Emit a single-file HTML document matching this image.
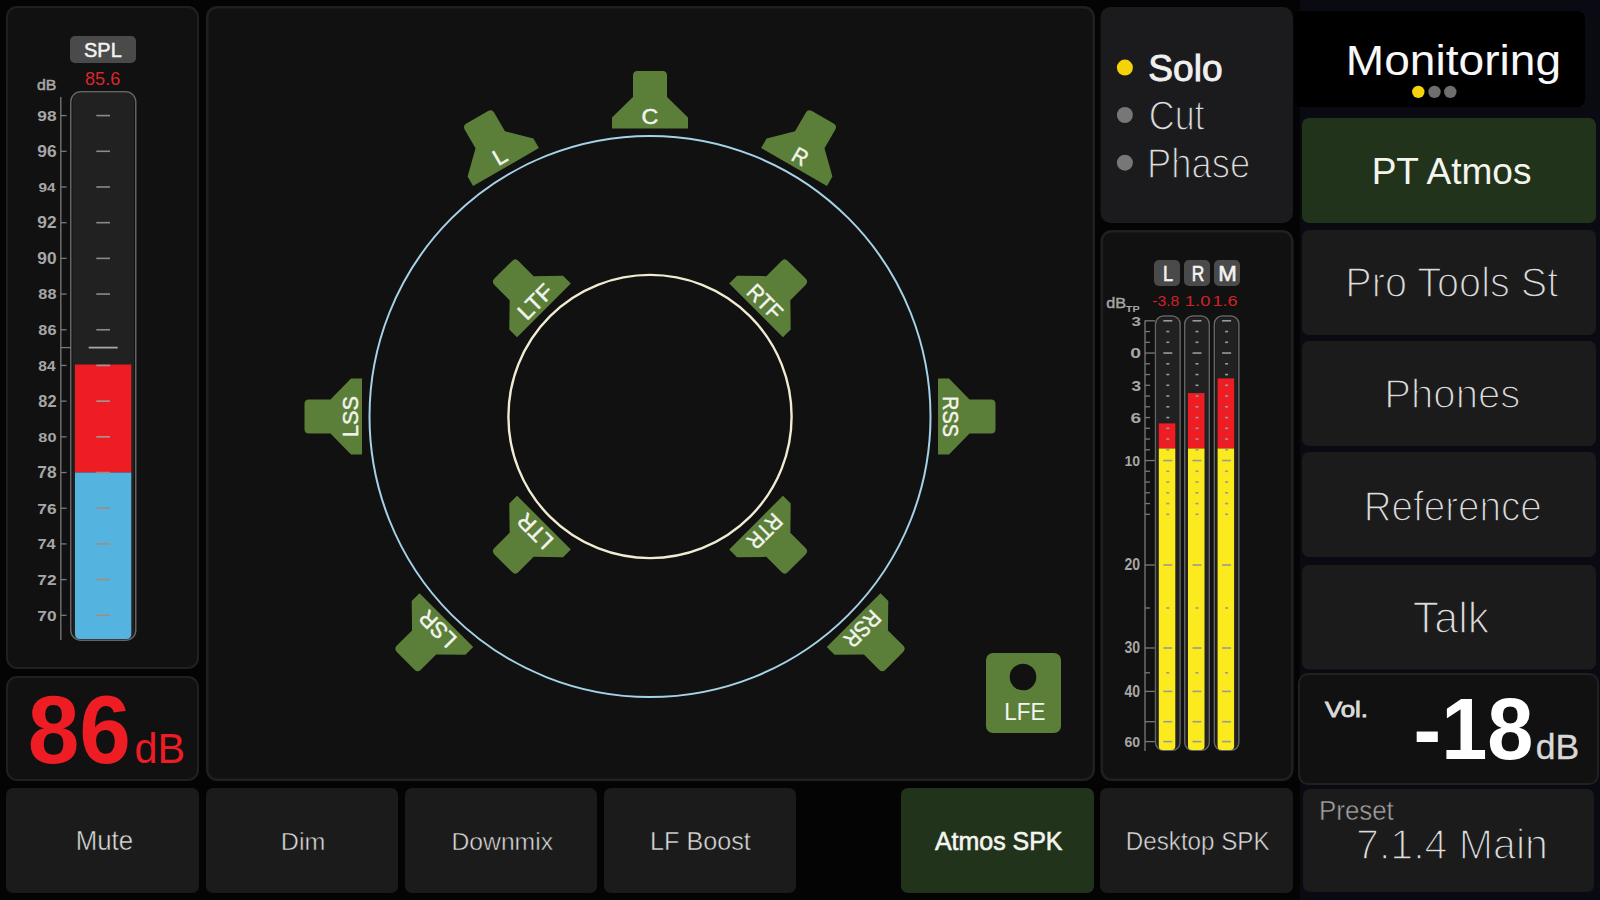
<!DOCTYPE html>
<html><head><meta charset="utf-8"><title>Monitoring</title>
<style>html,body{margin:0;padding:0;background:#040404;overflow:hidden;width:1600px;height:900px}svg{display:block}text{font-family:"Liberation Sans", sans-serif}</style>
</head><body>
<svg width="1600" height="900" viewBox="0 0 1600 900">
<rect x="0" y="0" width="1600" height="900" fill="#040404"/>
<rect x="1300" y="0" width="300" height="900" fill="#0a0a13"/>
<rect x="7.00" y="7.00" width="191.00" height="661.00" rx="10" fill="#111111" stroke="#202020" stroke-width="2" />
<rect x="70.00" y="36.00" width="66.00" height="27.00" rx="5" fill="#4a4a4a" />
<text x="84.06" y="57.2" font-size="20.22" fill="#f2f2f2" font-weight="normal" textLength="37.72" lengthAdjust="spacingAndGlyphs" stroke="#f2f2f2" stroke-width="0.5">SPL</text>
<text x="85.04" y="85" font-size="19.27" fill="#d8262a" font-weight="normal" textLength="35.23" lengthAdjust="spacingAndGlyphs">85.6</text>
<text x="36.95" y="90" font-size="15.5" fill="#a8a8a8" font-weight="normal" textLength="19.39" lengthAdjust="spacingAndGlyphs" stroke="#a8a8a8" stroke-width="0.5">dB</text>
<rect x="70.75" y="91.75" width="65.00" height="548.50" rx="10" fill="none" stroke="#646464" stroke-width="1.5" />
<rect x="72.50" y="93.00" width="61.50" height="546.00" rx="8" fill="#212121" />
<path d="M75 364.6 H131.3 V472.5 H75 Z" fill="#ee1d24"/>
<path d="M75 472.5 H131.3 V634 Q131.3 639 126.3 639 H80 Q75 639 75 634 Z" fill="#55b3df"/>
<line x1="60.8" y1="97" x2="60.8" y2="640" stroke="#7a7a7a" stroke-width="1.3"/>
<line x1="60.8" y1="115.6" x2="66.5" y2="115.6" stroke="#7a7a7a" stroke-width="1.3"/>
<text x="37.37" y="121.0" font-size="13.89" fill="#a6a6a6" font-weight="bold" textLength="19.26" lengthAdjust="spacingAndGlyphs">98</text>
<line x1="96.3" y1="115.6" x2="110" y2="115.6" stroke="#8a8a8a" stroke-width="1.6"/>
<line x1="60.8" y1="151.29285714285714" x2="66.5" y2="151.29285714285714" stroke="#7a7a7a" stroke-width="1.3"/>
<text x="37.37" y="156.69285714285715" font-size="15.73" fill="#a6a6a6" font-weight="bold" textLength="19.26" lengthAdjust="spacingAndGlyphs">96</text>
<line x1="96.3" y1="151.29285714285714" x2="110" y2="151.29285714285714" stroke="#8a8a8a" stroke-width="1.6"/>
<line x1="60.8" y1="186.98571428571427" x2="66.5" y2="186.98571428571427" stroke="#7a7a7a" stroke-width="1.3"/>
<text x="38.41" y="192.38571428571427" font-size="13.55" fill="#a6a6a6" font-weight="bold" textLength="17.13" lengthAdjust="spacingAndGlyphs">94</text>
<line x1="96.3" y1="186.98571428571427" x2="110" y2="186.98571428571427" stroke="#8a8a8a" stroke-width="1.6"/>
<line x1="60.8" y1="222.67857142857142" x2="66.5" y2="222.67857142857142" stroke="#7a7a7a" stroke-width="1.3"/>
<text x="37.37" y="228.07857142857142" font-size="16.31" fill="#a6a6a6" font-weight="bold" textLength="19.26" lengthAdjust="spacingAndGlyphs">92</text>
<line x1="96.3" y1="222.67857142857142" x2="110" y2="222.67857142857142" stroke="#8a8a8a" stroke-width="1.6"/>
<line x1="60.8" y1="258.3714285714285" x2="66.5" y2="258.3714285714285" stroke="#7a7a7a" stroke-width="1.3"/>
<text x="37.37" y="263.7714285714285" font-size="16.7" fill="#a6a6a6" font-weight="bold" textLength="19.26" lengthAdjust="spacingAndGlyphs">90</text>
<line x1="96.3" y1="258.3714285714285" x2="110" y2="258.3714285714285" stroke="#8a8a8a" stroke-width="1.6"/>
<line x1="60.8" y1="294.0642857142857" x2="66.5" y2="294.0642857142857" stroke="#7a7a7a" stroke-width="1.3"/>
<text x="38.33" y="299.46428571428567" font-size="15.35" fill="#a6a6a6" font-weight="bold" textLength="18.11" lengthAdjust="spacingAndGlyphs">88</text>
<line x1="96.3" y1="294.0642857142857" x2="110" y2="294.0642857142857" stroke="#8a8a8a" stroke-width="1.6"/>
<line x1="60.8" y1="329.75714285714287" x2="66.5" y2="329.75714285714287" stroke="#7a7a7a" stroke-width="1.3"/>
<text x="38.33" y="335.15714285714284" font-size="14.38" fill="#a6a6a6" font-weight="bold" textLength="18.11" lengthAdjust="spacingAndGlyphs">86</text>
<line x1="96.3" y1="329.75714285714287" x2="110" y2="329.75714285714287" stroke="#8a8a8a" stroke-width="1.6"/>
<line x1="60.8" y1="365.44999999999993" x2="66.5" y2="365.44999999999993" stroke="#7a7a7a" stroke-width="1.3"/>
<text x="38.33" y="370.8499999999999" font-size="14.71" fill="#a6a6a6" font-weight="bold" textLength="17.17" lengthAdjust="spacingAndGlyphs">84</text>
<line x1="96.3" y1="365.44999999999993" x2="110" y2="365.44999999999993" stroke="#9a9a9a" stroke-width="1.6"/>
<line x1="60.8" y1="401.1428571428571" x2="66.5" y2="401.1428571428571" stroke="#7a7a7a" stroke-width="1.3"/>
<text x="38.33" y="406.5428571428571" font-size="16.58" fill="#a6a6a6" font-weight="bold" textLength="18.11" lengthAdjust="spacingAndGlyphs">82</text>
<line x1="96.3" y1="401.1428571428571" x2="110" y2="401.1428571428571" stroke="#9a9a9a" stroke-width="1.6"/>
<line x1="60.8" y1="436.8357142857142" x2="66.5" y2="436.8357142857142" stroke="#7a7a7a" stroke-width="1.3"/>
<text x="38.33" y="442.23571428571415" font-size="13.68" fill="#a6a6a6" font-weight="bold" textLength="18.11" lengthAdjust="spacingAndGlyphs">80</text>
<line x1="96.3" y1="436.8357142857142" x2="110" y2="436.8357142857142" stroke="#9a9a9a" stroke-width="1.6"/>
<line x1="60.8" y1="472.52857142857135" x2="66.5" y2="472.52857142857135" stroke="#7a7a7a" stroke-width="1.3"/>
<text x="37.37" y="477.92857142857133" font-size="15.58" fill="#a6a6a6" font-weight="bold" textLength="19.26" lengthAdjust="spacingAndGlyphs">78</text>
<line x1="96.3" y1="472.52857142857135" x2="110" y2="472.52857142857135" stroke="#a08c84" stroke-width="1.6"/>
<line x1="60.8" y1="508.22142857142853" x2="66.5" y2="508.22142857142853" stroke="#7a7a7a" stroke-width="1.3"/>
<text x="37.37" y="513.6214285714285" font-size="14.62" fill="#a6a6a6" font-weight="bold" textLength="19.26" lengthAdjust="spacingAndGlyphs">76</text>
<line x1="96.3" y1="508.22142857142853" x2="110" y2="508.22142857142853" stroke="#a08c84" stroke-width="1.6"/>
<line x1="60.8" y1="543.9142857142857" x2="66.5" y2="543.9142857142857" stroke="#7a7a7a" stroke-width="1.3"/>
<text x="37.4" y="549.3142857142857" font-size="13.72" fill="#a6a6a6" font-weight="bold" textLength="18.19" lengthAdjust="spacingAndGlyphs">74</text>
<line x1="96.3" y1="543.9142857142857" x2="110" y2="543.9142857142857" stroke="#a08c84" stroke-width="1.6"/>
<line x1="60.8" y1="579.6071428571428" x2="66.5" y2="579.6071428571428" stroke="#7a7a7a" stroke-width="1.3"/>
<text x="37.37" y="585.0071428571428" font-size="13.75" fill="#a6a6a6" font-weight="bold" textLength="19.26" lengthAdjust="spacingAndGlyphs">72</text>
<line x1="96.3" y1="579.6071428571428" x2="110" y2="579.6071428571428" stroke="#a08c84" stroke-width="1.6"/>
<line x1="60.8" y1="615.3" x2="66.5" y2="615.3" stroke="#7a7a7a" stroke-width="1.3"/>
<text x="37.37" y="620.6999999999999" font-size="15.54" fill="#a6a6a6" font-weight="bold" textLength="19.26" lengthAdjust="spacingAndGlyphs">70</text>
<line x1="96.3" y1="615.3" x2="110" y2="615.3" stroke="#a08c84" stroke-width="1.6"/>
<line x1="60.8" y1="347.6035714285714" x2="70.7" y2="347.6035714285714" stroke="#7a7a7a" stroke-width="1.3"/>
<line x1="88.7" y1="347.6035714285714" x2="117.7" y2="347.6035714285714" stroke="#a8a8a8" stroke-width="1.8"/>
<rect x="7.00" y="677.00" width="191.00" height="103.00" rx="10" fill="#111111" stroke="#202020" stroke-width="2" />
<text x="27.66" y="762.7" font-size="95.68" fill="#ee1d24" font-weight="bold" textLength="103.28" lengthAdjust="spacingAndGlyphs">86</text>
<text x="134.49" y="762.7" font-size="43.21" fill="#ee1d24" font-weight="normal" textLength="50.61" lengthAdjust="spacingAndGlyphs">dB</text>
<rect x="207.25" y="7.25" width="886.50" height="772.50" rx="10" fill="#111111" stroke="#202020" stroke-width="2.5" />
<circle cx="650" cy="416.5" r="280.5" fill="none" stroke="#a6d2e8" stroke-width="2"/>
<circle cx="650" cy="416.5" r="141.6" fill="none" stroke="#f0ecd2" stroke-width="2.4"/>
<g transform="translate(650,416.5) rotate(0) translate(0,-288)">
<path d="M-38 0 L-38 -11 L-17 -31.5 L-17 -53 Q-17 -57.5 -12.5 -57.5 L12.5 -57.5 Q17 -57.5 17 -53 L17 -31.5 L38 -11 L38 0 Z" fill="#5b7f39"/>
<text x="0" y="-4.5" font-size="22.5" fill="#f4f4ee" stroke="#f4f4ee" stroke-width="0.45" text-anchor="middle" textLength="16.8" lengthAdjust="spacingAndGlyphs">C</text>
</g>
<g transform="translate(650,416.5) rotate(-30) translate(0,-288)">
<path d="M-38 0 L-38 -11 L-17 -31.5 L-17 -53 Q-17 -57.5 -12.5 -57.5 L12.5 -57.5 Q17 -57.5 17 -53 L17 -31.5 L38 -11 L38 0 Z" fill="#5b7f39"/>
<text x="0" y="-4.5" font-size="22.5" fill="#f4f4ee" stroke="#f4f4ee" stroke-width="0.45" text-anchor="middle" textLength="12.6" lengthAdjust="spacingAndGlyphs">L</text>
</g>
<g transform="translate(650,416.5) rotate(30) translate(0,-288)">
<path d="M-38 0 L-38 -11 L-17 -31.5 L-17 -53 Q-17 -57.5 -12.5 -57.5 L12.5 -57.5 Q17 -57.5 17 -53 L17 -31.5 L38 -11 L38 0 Z" fill="#5b7f39"/>
<text x="0" y="-4.5" font-size="22.5" fill="#f4f4ee" stroke="#f4f4ee" stroke-width="0.45" text-anchor="middle" textLength="14.7" lengthAdjust="spacingAndGlyphs">R</text>
</g>
<g transform="translate(650,416.5) rotate(-90) translate(0,-288)">
<path d="M-38 0 L-38 -11 L-17 -31.5 L-17 -53 Q-17 -57.5 -12.5 -57.5 L12.5 -57.5 Q17 -57.5 17 -53 L17 -31.5 L38 -11 L38 0 Z" fill="#5b7f39"/>
<text x="0" y="-4.5" font-size="22.5" fill="#f4f4ee" stroke="#f4f4ee" stroke-width="0.45" text-anchor="middle" textLength="41.0" lengthAdjust="spacingAndGlyphs">LSS</text>
</g>
<g transform="translate(650,416.5) rotate(90) translate(0,-288)">
<path d="M-38 0 L-38 -11 L-17 -31.5 L-17 -53 Q-17 -57.5 -12.5 -57.5 L12.5 -57.5 Q17 -57.5 17 -53 L17 -31.5 L38 -11 L38 0 Z" fill="#5b7f39"/>
<text x="0" y="-4.5" font-size="22.5" fill="#f4f4ee" stroke="#f4f4ee" stroke-width="0.45" text-anchor="middle" textLength="41.0" lengthAdjust="spacingAndGlyphs">RSS</text>
</g>
<g transform="translate(650,416.5) rotate(-135) translate(0,-288)">
<path d="M-38 0 L-38 -11 L-17 -31.5 L-17 -53 Q-17 -57.5 -12.5 -57.5 L12.5 -57.5 Q17 -57.5 17 -53 L17 -31.5 L38 -11 L38 0 Z" fill="#5b7f39"/>
<text x="0" y="-4.5" font-size="22.5" fill="#f4f4ee" stroke="#f4f4ee" stroke-width="0.45" text-anchor="middle" textLength="42.0" lengthAdjust="spacingAndGlyphs">LSR</text>
</g>
<g transform="translate(650,416.5) rotate(135) translate(0,-288)">
<path d="M-38 0 L-38 -11 L-17 -31.5 L-17 -53 Q-17 -57.5 -12.5 -57.5 L12.5 -57.5 Q17 -57.5 17 -53 L17 -31.5 L38 -11 L38 0 Z" fill="#5b7f39"/>
<text x="0" y="-4.5" font-size="22.5" fill="#f4f4ee" stroke="#f4f4ee" stroke-width="0.45" text-anchor="middle" textLength="42.0" lengthAdjust="spacingAndGlyphs">RSR</text>
</g>
<g transform="translate(650,416.5) rotate(-45) translate(0,-150)">
<path d="M-38 0 L-38 -11 L-17 -31.5 L-17 -53 Q-17 -57.5 -12.5 -57.5 L12.5 -57.5 Q17 -57.5 17 -53 L17 -31.5 L38 -11 L38 0 Z" fill="#5b7f39"/>
<text x="0" y="-4.5" font-size="22.5" fill="#f4f4ee" stroke="#f4f4ee" stroke-width="0.45" text-anchor="middle" textLength="39.9" lengthAdjust="spacingAndGlyphs">LTF</text>
</g>
<g transform="translate(650,416.5) rotate(45) translate(0,-150)">
<path d="M-38 0 L-38 -11 L-17 -31.5 L-17 -53 Q-17 -57.5 -12.5 -57.5 L12.5 -57.5 Q17 -57.5 17 -53 L17 -31.5 L38 -11 L38 0 Z" fill="#5b7f39"/>
<text x="0" y="-4.5" font-size="22.5" fill="#f4f4ee" stroke="#f4f4ee" stroke-width="0.45" text-anchor="middle" textLength="39.9" lengthAdjust="spacingAndGlyphs">RTF</text>
</g>
<g transform="translate(650,416.5) rotate(-135) translate(0,-150)">
<path d="M-38 0 L-38 -11 L-17 -31.5 L-17 -53 Q-17 -57.5 -12.5 -57.5 L12.5 -57.5 Q17 -57.5 17 -53 L17 -31.5 L38 -11 L38 0 Z" fill="#5b7f39"/>
<text x="0" y="-4.5" font-size="22.5" fill="#f4f4ee" stroke="#f4f4ee" stroke-width="0.45" text-anchor="middle" textLength="39.9" lengthAdjust="spacingAndGlyphs">LTR</text>
</g>
<g transform="translate(650,416.5) rotate(135) translate(0,-150)">
<path d="M-38 0 L-38 -11 L-17 -31.5 L-17 -53 Q-17 -57.5 -12.5 -57.5 L12.5 -57.5 Q17 -57.5 17 -53 L17 -31.5 L38 -11 L38 0 Z" fill="#5b7f39"/>
<text x="0" y="-4.5" font-size="22.5" fill="#f4f4ee" stroke="#f4f4ee" stroke-width="0.45" text-anchor="middle" textLength="39.9" lengthAdjust="spacingAndGlyphs">RTR</text>
</g>
<rect x="986.00" y="653.00" width="75.00" height="80.00" rx="7" fill="#5b7f39" />
<circle cx="1023" cy="677" r="13.3" fill="#111111"/>
<text x="1004.2" y="719.7" font-size="24.17" fill="#f4f4ee" font-weight="normal" textLength="41.22" lengthAdjust="spacingAndGlyphs">LFE</text>
<rect x="1100.50" y="7.00" width="192.50" height="216.00" rx="10" fill="#1b1b1d" />
<circle cx="1124.9" cy="67.6" r="8" fill="#f5d20a"/>
<circle cx="1124.9" cy="115" r="8" fill="#777777"/>
<circle cx="1124.9" cy="162.7" r="8" fill="#777777"/>
<text x="1148.27" y="80.9" font-size="36.26" fill="#f0f0f0" font-weight="normal" textLength="74.26" lengthAdjust="spacingAndGlyphs" stroke="#f0f0f0" stroke-width="0.9">Solo</text>
<text x="1148.73" y="129.8" font-size="42.62" fill="#dcdcdc" font-weight="normal" textLength="55.88" lengthAdjust="spacingAndGlyphs" stroke="#1b1b1d" stroke-width="1.4">Cut</text>
<text x="1147.03" y="177.8" font-size="41.85" fill="#dcdcdc" font-weight="normal" textLength="103.11" lengthAdjust="spacingAndGlyphs" stroke="#1b1b1d" stroke-width="1.4">Phase</text>
<rect x="1101.75" y="231.25" width="190.50" height="548.50" rx="10" fill="#111111" stroke="#202020" stroke-width="2.5" />
<rect x="1154.00" y="260.00" width="26.00" height="26.00" rx="5" fill="#4a4a4a" />
<text x="1163.06" y="281.2" font-size="21.35" fill="#f4f4f4" font-weight="normal" textLength="10.1" lengthAdjust="spacingAndGlyphs" stroke="#f4f4f4" stroke-width="0.6">L</text>
<text x="1152.17" y="306.1" font-size="14.01" fill="#d02226" font-weight="normal" textLength="27.18" lengthAdjust="spacingAndGlyphs">-3.8</text>
<rect x="1184.00" y="260.00" width="26.00" height="26.00" rx="5" fill="#4a4a4a" />
<text x="1191.83" y="281.2" font-size="21.35" fill="#f4f4f4" font-weight="normal" textLength="12.56" lengthAdjust="spacingAndGlyphs" stroke="#f4f4f4" stroke-width="0.6">R</text>
<text x="1184.84" y="306.1" font-size="14.01" fill="#d02226" font-weight="normal" textLength="25.53" lengthAdjust="spacingAndGlyphs">1.0</text>
<rect x="1214.00" y="260.00" width="26.00" height="26.00" rx="5" fill="#4a4a4a" />
<text x="1218.36" y="281.2" font-size="21.35" fill="#f4f4f4" font-weight="normal" textLength="18.52" lengthAdjust="spacingAndGlyphs" stroke="#f4f4f4" stroke-width="0.6">M</text>
<text x="1212.45" y="306.1" font-size="14.01" fill="#d02226" font-weight="normal" textLength="25.29" lengthAdjust="spacingAndGlyphs">1.6</text>
<text x="1106.21" y="308.4" font-size="13.79" fill="#a6a6a6" font-weight="normal" textLength="19.84" lengthAdjust="spacingAndGlyphs" stroke="#a6a6a6" stroke-width="0.4">dB</text>
<text x="1125.89" y="311.7" font-size="9.96" fill="#a6a6a6" font-weight="bold" textLength="13.86" lengthAdjust="spacingAndGlyphs">TP</text>
<rect x="1155.55" y="316.05" width="24.50" height="434.20" rx="8" fill="none" stroke="#646464" stroke-width="1.5" />
<rect x="1156.80" y="317.50" width="22.00" height="431.50" rx="6" fill="#212121" />
<rect x="1184.75" y="316.05" width="24.50" height="434.20" rx="8" fill="none" stroke="#646464" stroke-width="1.5" />
<rect x="1186.00" y="317.50" width="22.00" height="431.50" rx="6" fill="#212121" />
<rect x="1214.35" y="316.05" width="24.50" height="434.20" rx="8" fill="none" stroke="#646464" stroke-width="1.5" />
<rect x="1215.60" y="317.50" width="22.00" height="431.50" rx="6" fill="#212121" />
<rect x="1158.8" y="423.4" width="16.5" height="25.100000000000023" fill="#ee1d24"/>
<path d="M1158.8 448.5 H1175.3 V746 Q1175.3 750 1171.3 750 H1162.8 Q1158.8 750 1158.8 746 Z" fill="#fbea1e"/>
<rect x="1188" y="393.1" width="16.5" height="55.39999999999998" fill="#ee1d24"/>
<path d="M1188 448.5 H1204.5 V746 Q1204.5 750 1200.5 750 H1192 Q1188 750 1188 746 Z" fill="#fbea1e"/>
<rect x="1217.6" y="378.4" width="16.5" height="70.10000000000002" fill="#ee1d24"/>
<path d="M1217.6 448.5 H1234.1 V746 Q1234.1 750 1230.1 750 H1221.6 Q1217.6 750 1217.6 746 Z" fill="#fbea1e"/>
<line x1="1145" y1="320.5" x2="1145" y2="751" stroke="#7a7a7a" stroke-width="1.3"/>
<line x1="1145" y1="320.8" x2="1154.8" y2="320.8" stroke="#7a7a7a" stroke-width="1.3"/>
<line x1="1163.3" y1="320.8" x2="1172.3" y2="320.8" stroke="#9a9a9a" stroke-width="1.6"/>
<line x1="1192.5" y1="320.8" x2="1201.5" y2="320.8" stroke="#9a9a9a" stroke-width="1.6"/>
<line x1="1222.1" y1="320.8" x2="1231.1" y2="320.8" stroke="#9a9a9a" stroke-width="1.6"/>
<line x1="1145" y1="353.05" x2="1154.8" y2="353.05" stroke="#7a7a7a" stroke-width="1.3"/>
<line x1="1163.3" y1="353.05" x2="1172.3" y2="353.05" stroke="#9a9a9a" stroke-width="1.6"/>
<line x1="1192.5" y1="353.05" x2="1201.5" y2="353.05" stroke="#9a9a9a" stroke-width="1.6"/>
<line x1="1222.1" y1="353.05" x2="1231.1" y2="353.05" stroke="#9a9a9a" stroke-width="1.6"/>
<line x1="1145" y1="460.54999999999995" x2="1154.8" y2="460.54999999999995" stroke="#7a7a7a" stroke-width="1.3"/>
<line x1="1163.3" y1="460.54999999999995" x2="1172.3" y2="460.54999999999995" stroke="#9a9a9a" stroke-width="1.6"/>
<line x1="1192.5" y1="460.54999999999995" x2="1201.5" y2="460.54999999999995" stroke="#9a9a9a" stroke-width="1.6"/>
<line x1="1222.1" y1="460.54999999999995" x2="1231.1" y2="460.54999999999995" stroke="#9a9a9a" stroke-width="1.6"/>
<line x1="1145" y1="565.0" x2="1154.8" y2="565.0" stroke="#7a7a7a" stroke-width="1.3"/>
<line x1="1163.3" y1="565.0" x2="1172.3" y2="565.0" stroke="#9a9a9a" stroke-width="1.6"/>
<line x1="1192.5" y1="565.0" x2="1201.5" y2="565.0" stroke="#9a9a9a" stroke-width="1.6"/>
<line x1="1222.1" y1="565.0" x2="1231.1" y2="565.0" stroke="#9a9a9a" stroke-width="1.6"/>
<line x1="1145" y1="648.0" x2="1154.8" y2="648.0" stroke="#7a7a7a" stroke-width="1.3"/>
<line x1="1163.3" y1="648.0" x2="1172.3" y2="648.0" stroke="#9a9a9a" stroke-width="1.6"/>
<line x1="1192.5" y1="648.0" x2="1201.5" y2="648.0" stroke="#9a9a9a" stroke-width="1.6"/>
<line x1="1222.1" y1="648.0" x2="1231.1" y2="648.0" stroke="#9a9a9a" stroke-width="1.6"/>
<line x1="1145" y1="691.4" x2="1154.8" y2="691.4" stroke="#7a7a7a" stroke-width="1.3"/>
<line x1="1163.3" y1="691.4" x2="1172.3" y2="691.4" stroke="#9a9a9a" stroke-width="1.6"/>
<line x1="1192.5" y1="691.4" x2="1201.5" y2="691.4" stroke="#9a9a9a" stroke-width="1.6"/>
<line x1="1222.1" y1="691.4" x2="1231.1" y2="691.4" stroke="#9a9a9a" stroke-width="1.6"/>
<line x1="1145" y1="721.7" x2="1154.8" y2="721.7" stroke="#7a7a7a" stroke-width="1.3"/>
<line x1="1163.3" y1="721.7" x2="1172.3" y2="721.7" stroke="#9a9a9a" stroke-width="1.6"/>
<line x1="1192.5" y1="721.7" x2="1201.5" y2="721.7" stroke="#9a9a9a" stroke-width="1.6"/>
<line x1="1222.1" y1="721.7" x2="1231.1" y2="721.7" stroke="#9a9a9a" stroke-width="1.6"/>
<line x1="1145" y1="741.6" x2="1154.8" y2="741.6" stroke="#7a7a7a" stroke-width="1.3"/>
<line x1="1163.3" y1="741.6" x2="1172.3" y2="741.6" stroke="#9a9a9a" stroke-width="1.6"/>
<line x1="1192.5" y1="741.6" x2="1201.5" y2="741.6" stroke="#9a9a9a" stroke-width="1.6"/>
<line x1="1222.1" y1="741.6" x2="1231.1" y2="741.6" stroke="#9a9a9a" stroke-width="1.6"/>
<line x1="1145" y1="331.55" x2="1150" y2="331.55" stroke="#7a7a7a" stroke-width="1.3"/>
<line x1="1166.3" y1="331.55" x2="1169.3" y2="331.55" stroke="#9a9a9a" stroke-width="1.6"/>
<line x1="1195.5" y1="331.55" x2="1198.5" y2="331.55" stroke="#9a9a9a" stroke-width="1.6"/>
<line x1="1225.1" y1="331.55" x2="1228.1" y2="331.55" stroke="#9a9a9a" stroke-width="1.6"/>
<line x1="1145" y1="342.3" x2="1150" y2="342.3" stroke="#7a7a7a" stroke-width="1.3"/>
<line x1="1166.3" y1="342.3" x2="1169.3" y2="342.3" stroke="#9a9a9a" stroke-width="1.6"/>
<line x1="1195.5" y1="342.3" x2="1198.5" y2="342.3" stroke="#9a9a9a" stroke-width="1.6"/>
<line x1="1225.1" y1="342.3" x2="1228.1" y2="342.3" stroke="#9a9a9a" stroke-width="1.6"/>
<line x1="1145" y1="363.8" x2="1150" y2="363.8" stroke="#7a7a7a" stroke-width="1.3"/>
<line x1="1166.3" y1="363.8" x2="1169.3" y2="363.8" stroke="#9a9a9a" stroke-width="1.6"/>
<line x1="1195.5" y1="363.8" x2="1198.5" y2="363.8" stroke="#9a9a9a" stroke-width="1.6"/>
<line x1="1225.1" y1="363.8" x2="1228.1" y2="363.8" stroke="#9a9a9a" stroke-width="1.6"/>
<line x1="1145" y1="374.55" x2="1150" y2="374.55" stroke="#7a7a7a" stroke-width="1.3"/>
<line x1="1166.3" y1="374.55" x2="1169.3" y2="374.55" stroke="#9a9a9a" stroke-width="1.6"/>
<line x1="1195.5" y1="374.55" x2="1198.5" y2="374.55" stroke="#9a9a9a" stroke-width="1.6"/>
<line x1="1225.1" y1="374.55" x2="1228.1" y2="374.55" stroke="#9a9a9a" stroke-width="1.6"/>
<line x1="1145" y1="385.29999999999995" x2="1150" y2="385.29999999999995" stroke="#7a7a7a" stroke-width="1.3"/>
<line x1="1166.3" y1="385.29999999999995" x2="1169.3" y2="385.29999999999995" stroke="#9a9a9a" stroke-width="1.6"/>
<line x1="1195.5" y1="385.29999999999995" x2="1198.5" y2="385.29999999999995" stroke="#9a9a9a" stroke-width="1.6"/>
<line x1="1225.1" y1="385.29999999999995" x2="1228.1" y2="385.29999999999995" stroke="#9a9a9a" stroke-width="1.6"/>
<line x1="1145" y1="396.05" x2="1150" y2="396.05" stroke="#7a7a7a" stroke-width="1.3"/>
<line x1="1166.3" y1="396.05" x2="1169.3" y2="396.05" stroke="#9a9a9a" stroke-width="1.6"/>
<line x1="1195.5" y1="396.05" x2="1198.5" y2="396.05" stroke="#9a9a9a" stroke-width="1.6"/>
<line x1="1225.1" y1="396.05" x2="1228.1" y2="396.05" stroke="#9a9a9a" stroke-width="1.6"/>
<line x1="1145" y1="406.79999999999995" x2="1150" y2="406.79999999999995" stroke="#7a7a7a" stroke-width="1.3"/>
<line x1="1166.3" y1="406.79999999999995" x2="1169.3" y2="406.79999999999995" stroke="#9a9a9a" stroke-width="1.6"/>
<line x1="1195.5" y1="406.79999999999995" x2="1198.5" y2="406.79999999999995" stroke="#9a9a9a" stroke-width="1.6"/>
<line x1="1225.1" y1="406.79999999999995" x2="1228.1" y2="406.79999999999995" stroke="#9a9a9a" stroke-width="1.6"/>
<line x1="1145" y1="417.54999999999995" x2="1150" y2="417.54999999999995" stroke="#7a7a7a" stroke-width="1.3"/>
<line x1="1166.3" y1="417.54999999999995" x2="1169.3" y2="417.54999999999995" stroke="#9a9a9a" stroke-width="1.6"/>
<line x1="1195.5" y1="417.54999999999995" x2="1198.5" y2="417.54999999999995" stroke="#9a9a9a" stroke-width="1.6"/>
<line x1="1225.1" y1="417.54999999999995" x2="1228.1" y2="417.54999999999995" stroke="#9a9a9a" stroke-width="1.6"/>
<line x1="1145" y1="428.29999999999995" x2="1150" y2="428.29999999999995" stroke="#7a7a7a" stroke-width="1.3"/>
<line x1="1166.3" y1="428.29999999999995" x2="1169.3" y2="428.29999999999995" stroke="#9a9a9a" stroke-width="1.6"/>
<line x1="1195.5" y1="428.29999999999995" x2="1198.5" y2="428.29999999999995" stroke="#9a9a9a" stroke-width="1.6"/>
<line x1="1225.1" y1="428.29999999999995" x2="1228.1" y2="428.29999999999995" stroke="#9a9a9a" stroke-width="1.6"/>
<line x1="1145" y1="439.04999999999995" x2="1150" y2="439.04999999999995" stroke="#7a7a7a" stroke-width="1.3"/>
<line x1="1166.3" y1="439.04999999999995" x2="1169.3" y2="439.04999999999995" stroke="#9a9a9a" stroke-width="1.6"/>
<line x1="1195.5" y1="439.04999999999995" x2="1198.5" y2="439.04999999999995" stroke="#9a9a9a" stroke-width="1.6"/>
<line x1="1225.1" y1="439.04999999999995" x2="1228.1" y2="439.04999999999995" stroke="#9a9a9a" stroke-width="1.6"/>
<line x1="1145" y1="449.79999999999995" x2="1150" y2="449.79999999999995" stroke="#7a7a7a" stroke-width="1.3"/>
<line x1="1166.3" y1="449.79999999999995" x2="1169.3" y2="449.79999999999995" stroke="#9a9a9a" stroke-width="1.6"/>
<line x1="1195.5" y1="449.79999999999995" x2="1198.5" y2="449.79999999999995" stroke="#9a9a9a" stroke-width="1.6"/>
<line x1="1225.1" y1="449.79999999999995" x2="1228.1" y2="449.79999999999995" stroke="#9a9a9a" stroke-width="1.6"/>
<line x1="1145" y1="471.29999999999995" x2="1150" y2="471.29999999999995" stroke="#7a7a7a" stroke-width="1.3"/>
<line x1="1166.3" y1="471.29999999999995" x2="1169.3" y2="471.29999999999995" stroke="#9a9a9a" stroke-width="1.6"/>
<line x1="1195.5" y1="471.29999999999995" x2="1198.5" y2="471.29999999999995" stroke="#9a9a9a" stroke-width="1.6"/>
<line x1="1225.1" y1="471.29999999999995" x2="1228.1" y2="471.29999999999995" stroke="#9a9a9a" stroke-width="1.6"/>
<line x1="1145" y1="482.04999999999995" x2="1150" y2="482.04999999999995" stroke="#7a7a7a" stroke-width="1.3"/>
<line x1="1166.3" y1="482.04999999999995" x2="1169.3" y2="482.04999999999995" stroke="#9a9a9a" stroke-width="1.6"/>
<line x1="1195.5" y1="482.04999999999995" x2="1198.5" y2="482.04999999999995" stroke="#9a9a9a" stroke-width="1.6"/>
<line x1="1225.1" y1="482.04999999999995" x2="1228.1" y2="482.04999999999995" stroke="#9a9a9a" stroke-width="1.6"/>
<line x1="1145" y1="492.79999999999995" x2="1150" y2="492.79999999999995" stroke="#7a7a7a" stroke-width="1.3"/>
<line x1="1166.3" y1="492.79999999999995" x2="1169.3" y2="492.79999999999995" stroke="#9a9a9a" stroke-width="1.6"/>
<line x1="1195.5" y1="492.79999999999995" x2="1198.5" y2="492.79999999999995" stroke="#9a9a9a" stroke-width="1.6"/>
<line x1="1225.1" y1="492.79999999999995" x2="1228.1" y2="492.79999999999995" stroke="#9a9a9a" stroke-width="1.6"/>
<line x1="1145" y1="503.54999999999995" x2="1150" y2="503.54999999999995" stroke="#7a7a7a" stroke-width="1.3"/>
<line x1="1166.3" y1="503.54999999999995" x2="1169.3" y2="503.54999999999995" stroke="#9a9a9a" stroke-width="1.6"/>
<line x1="1195.5" y1="503.54999999999995" x2="1198.5" y2="503.54999999999995" stroke="#9a9a9a" stroke-width="1.6"/>
<line x1="1225.1" y1="503.54999999999995" x2="1228.1" y2="503.54999999999995" stroke="#9a9a9a" stroke-width="1.6"/>
<line x1="1145" y1="514.3" x2="1150" y2="514.3" stroke="#7a7a7a" stroke-width="1.3"/>
<line x1="1166.3" y1="514.3" x2="1169.3" y2="514.3" stroke="#9a9a9a" stroke-width="1.6"/>
<line x1="1195.5" y1="514.3" x2="1198.5" y2="514.3" stroke="#9a9a9a" stroke-width="1.6"/>
<line x1="1225.1" y1="514.3" x2="1228.1" y2="514.3" stroke="#9a9a9a" stroke-width="1.6"/>
<line x1="1145" y1="608.0" x2="1150" y2="608.0" stroke="#7a7a7a" stroke-width="1.3"/>
<line x1="1166.3" y1="608.0" x2="1169.3" y2="608.0" stroke="#9a9a9a" stroke-width="1.6"/>
<line x1="1195.5" y1="608.0" x2="1198.5" y2="608.0" stroke="#9a9a9a" stroke-width="1.6"/>
<line x1="1225.1" y1="608.0" x2="1228.1" y2="608.0" stroke="#9a9a9a" stroke-width="1.6"/>
<line x1="1145" y1="672.8" x2="1150" y2="672.8" stroke="#7a7a7a" stroke-width="1.3"/>
<line x1="1166.3" y1="672.8" x2="1169.3" y2="672.8" stroke="#9a9a9a" stroke-width="1.6"/>
<line x1="1195.5" y1="672.8" x2="1198.5" y2="672.8" stroke="#9a9a9a" stroke-width="1.6"/>
<line x1="1225.1" y1="672.8" x2="1228.1" y2="672.8" stroke="#9a9a9a" stroke-width="1.6"/>
<text x="1131.53" y="326.1" font-size="13.66" fill="#a6a6a6" font-weight="bold" textLength="9.46" lengthAdjust="spacingAndGlyphs">3</text>
<text x="1130.34" y="358.35" font-size="15.56" fill="#a6a6a6" font-weight="bold" textLength="10.77" lengthAdjust="spacingAndGlyphs">0</text>
<text x="1131.51" y="390.59999999999997" font-size="15.41" fill="#a6a6a6" font-weight="bold" textLength="9.58" lengthAdjust="spacingAndGlyphs">3</text>
<text x="1130.41" y="422.84999999999997" font-size="14.91" fill="#a6a6a6" font-weight="bold" textLength="10.64" lengthAdjust="spacingAndGlyphs">6</text>
<text x="1124.51" y="465.84999999999997" font-size="14.91" fill="#a6a6a6" font-weight="bold" textLength="15.59" lengthAdjust="spacingAndGlyphs">10</text>
<text x="1124.51" y="570.3" font-size="15.66" fill="#a6a6a6" font-weight="bold" textLength="15.59" lengthAdjust="spacingAndGlyphs">20</text>
<text x="1124.51" y="653.3" font-size="15.66" fill="#a6a6a6" font-weight="bold" textLength="15.59" lengthAdjust="spacingAndGlyphs">30</text>
<text x="1124.51" y="696.6999999999999" font-size="15.8" fill="#a6a6a6" font-weight="bold" textLength="15.59" lengthAdjust="spacingAndGlyphs">40</text>
<text x="1124.51" y="746.9" font-size="13.76" fill="#a6a6a6" font-weight="bold" textLength="15.59" lengthAdjust="spacingAndGlyphs">60</text>
<rect x="1294.00" y="11.00" width="291.00" height="96.00" rx="8" fill="#000000" />
<text x="1345.86" y="74.7" font-size="43.17" fill="#f8f8f8" font-weight="normal" textLength="215.16" lengthAdjust="spacingAndGlyphs">Monitoring</text>
<circle cx="1418.3" cy="91.9" r="6.2" fill="#f5d20a"/>
<circle cx="1434.5" cy="91.9" r="6.2" fill="#6e6e6e"/>
<circle cx="1450.3" cy="91.9" r="6.2" fill="#6e6e6e"/>
<rect x="1302.00" y="118.00" width="294.00" height="105.00" rx="7" fill="#22331c" />
<text x="1371.63" y="183.75" font-size="37.57" fill="#f5f5ef" font-weight="normal" textLength="159.86" lengthAdjust="spacingAndGlyphs">PT Atmos</text>
<rect x="1302.00" y="230.00" width="294.00" height="105.00" rx="7" fill="#1b1b1b" />
<text x="1345.28" y="297.4" font-size="41.79" fill="#dcdcdc" font-weight="normal" textLength="212.97" lengthAdjust="spacingAndGlyphs" stroke="#1b1b1b" stroke-width="1.5">Pro Tools St</text>
<rect x="1302.00" y="341.00" width="294.00" height="105.00" rx="7" fill="#1b1b1b" />
<text x="1384.35" y="408.2" font-size="41.5" fill="#dcdcdc" font-weight="normal" textLength="135.95" lengthAdjust="spacingAndGlyphs" stroke="#1b1b1b" stroke-width="1.5">Phones</text>
<rect x="1302.00" y="452.00" width="294.00" height="105.00" rx="7" fill="#1b1b1b" />
<text x="1363.72" y="520.6" font-size="41.88" fill="#dcdcdc" font-weight="normal" textLength="178.06" lengthAdjust="spacingAndGlyphs" stroke="#1b1b1b" stroke-width="1.5">Reference</text>
<rect x="1302.00" y="565.00" width="294.00" height="104.50" rx="7" fill="#1b1b1b" />
<text x="1412.83" y="632.6" font-size="44.53" fill="#dcdcdc" font-weight="normal" textLength="76.42" lengthAdjust="spacingAndGlyphs" stroke="#1b1b1b" stroke-width="1.5">Talk</text>
<rect x="1299.00" y="674.00" width="299.00" height="110.00" rx="9" fill="#111111" stroke="#202020" stroke-width="2" />
<text x="1324.91" y="717" font-size="22.9" fill="#dadada" font-weight="normal" textLength="43.13" lengthAdjust="spacingAndGlyphs" stroke="#dadada" stroke-width="0.9">Vol.</text>
<text x="1413.61" y="759" font-size="87.23" fill="#ffffff" font-weight="bold" textLength="119.79" lengthAdjust="spacingAndGlyphs">-18</text>
<text x="1535.77" y="759" font-size="35.04" fill="#d8d8d8" font-weight="normal" textLength="43.46" lengthAdjust="spacingAndGlyphs" stroke="#d8d8d8" stroke-width="0.35">dB</text>
<rect x="1303.00" y="789.00" width="291.00" height="103.00" rx="7" fill="#1b1b1b" />
<text x="1319.03" y="820" font-size="28.06" fill="#a0a0a0" font-weight="normal" textLength="74.78" lengthAdjust="spacingAndGlyphs" stroke="#1b1b1b" stroke-width="0.5">Preset</text>
<text x="1356.05" y="859" font-size="42.29" fill="#dcdcdc" font-weight="normal" textLength="191.86" lengthAdjust="spacingAndGlyphs" stroke="#1b1b1b" stroke-width="1.5">7.1.4 Main</text>
<rect x="6.00" y="788.00" width="193.00" height="105.00" rx="7" fill="#1b1b1b" />
<text x="75.74" y="850" font-size="27.17" fill="#dcdcdc" font-weight="normal" textLength="57.34" lengthAdjust="spacingAndGlyphs" stroke="#1b1b1b" stroke-width="0.5">Mute</text>
<rect x="206.00" y="788.00" width="192.00" height="105.00" rx="7" fill="#1b1b1b" />
<text x="280.86" y="850" font-size="23.77" fill="#dcdcdc" font-weight="normal" textLength="44.49" lengthAdjust="spacingAndGlyphs" stroke="#1b1b1b" stroke-width="0.5">Dim</text>
<rect x="405.00" y="788.00" width="192.00" height="105.00" rx="7" fill="#1b1b1b" />
<text x="451.5" y="850" font-size="23.77" fill="#dcdcdc" font-weight="normal" textLength="101.51" lengthAdjust="spacingAndGlyphs" stroke="#1b1b1b" stroke-width="0.5">Downmix</text>
<rect x="604.00" y="788.00" width="192.00" height="105.00" rx="7" fill="#1b1b1b" />
<text x="650.11" y="850" font-size="26.16" fill="#dcdcdc" font-weight="normal" textLength="100.68" lengthAdjust="spacingAndGlyphs" stroke="#1b1b1b" stroke-width="0.5">LF Boost</text>
<rect x="901.00" y="788.00" width="193.00" height="105.00" rx="7" fill="#22331c" />
<text x="934.95" y="849.9" font-size="25.8" fill="#f5f5ef" font-weight="normal" textLength="127.48" lengthAdjust="spacingAndGlyphs" stroke="#f5f5ef" stroke-width="0.6">Atmos SPK</text>
<rect x="1100.00" y="788.00" width="193.00" height="105.00" rx="7" fill="#1b1b1b" />
<text x="1125.82" y="850" font-size="24.87" fill="#dcdcdc" font-weight="normal" textLength="143.81" lengthAdjust="spacingAndGlyphs" stroke="#1b1b1b" stroke-width="0.5">Desktop SPK</text>
</svg>
</body></html>
